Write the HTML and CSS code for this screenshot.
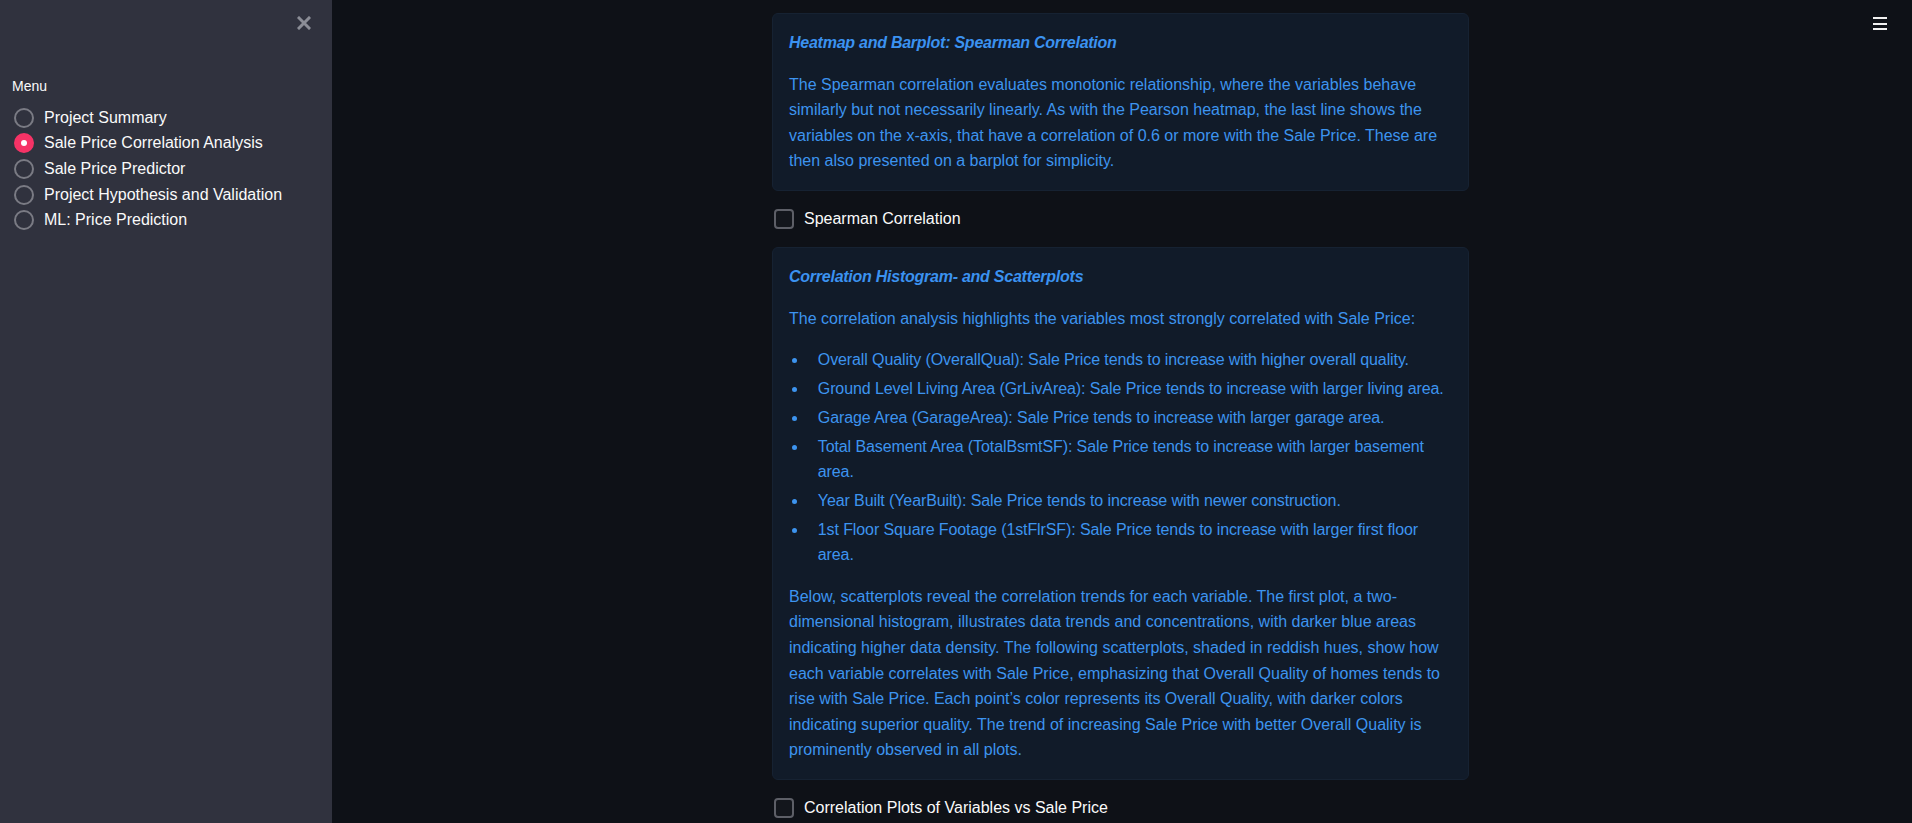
FILE: index.html
```html
<!DOCTYPE html>
<html lang="en">
<head>
<meta charset="utf-8">
<title>Sale Price Correlation Analysis</title>
<link rel="stylesheet" href="styles.css">
</head>
<body>
<div class="app">
  <aside class="sidebar">
    <div class="sidebar-top">
      <button class="close-btn" aria-label="Close sidebar">
        <svg width="14" height="14" viewBox="0 0 14 14"><path d="M2 2 L12 12 M12 2 L2 12" stroke="#8b8d96" stroke-width="3" stroke-linecap="square"/></svg>
      </button>
    </div>
    <div class="menu-label">Menu</div>
    <ul class="radio-group">
      <li class="radio"><span class="radio-dot"></span><span class="radio-text">Project Summary</span></li>
      <li class="radio selected"><span class="radio-dot"></span><span class="radio-text">Sale Price Correlation Analysis</span></li>
      <li class="radio"><span class="radio-dot"></span><span class="radio-text">Sale Price Predictor</span></li>
      <li class="radio"><span class="radio-dot"></span><span class="radio-text">Project Hypothesis and Validation</span></li>
      <li class="radio"><span class="radio-dot"></span><span class="radio-text">ML: Price Prediction</span></li>
    </ul>
  </aside>
  <main class="main">
    <button class="menu-btn" aria-label="Main menu">
      <span></span><span></span><span></span>
    </button>
    <div class="block">
      <div class="info">
        <p class="info-title">Heatmap and Barplot: Spearman Correlation</p>
        <p>The Spearman correlation evaluates monotonic relationship, where the variables behave similarly but not necessarily linearly. As with the Pearson heatmap, the last line shows the variables on the x-axis, that have a correlation of 0.6 or more with the Sale Price. These are then also presented on a barplot for simplicity.</p>
      </div>
      <label class="checkbox"><span class="box"></span><span>Spearman Correlation</span></label>
      <div class="info">
        <p class="info-title">Correlation Histogram- and Scatterplots</p>
        <p>The correlation analysis highlights the variables most strongly correlated with Sale Price:</p>
        <ul class="bullets">
          <li>Overall Quality (OverallQual): Sale Price tends to increase with higher overall quality.</li>
          <li>Ground Level Living Area (GrLivArea): Sale Price tends to increase with larger living area.</li>
          <li>Garage Area (GarageArea): Sale Price tends to increase with larger garage area.</li>
          <li>Total Basement Area (TotalBsmtSF): Sale Price tends to increase with larger basement area.</li>
          <li>Year Built (YearBuilt): Sale Price tends to increase with newer construction.</li>
          <li>1st Floor Square Footage (1stFlrSF): Sale Price tends to increase with larger first floor area.</li>
        </ul>
        <p>Below, scatterplots reveal the correlation trends for each variable. The first plot, a two-dimensional histogram, illustrates data trends and concentrations, with darker blue areas indicating higher data density. The following scatterplots, shaded in reddish hues, show how each variable correlates with Sale Price, emphasizing that Overall Quality of homes tends to rise with Sale Price. Each point’s color represents its Overall Quality, with darker colors indicating superior quality. The trend of increasing Sale Price with better Overall Quality is prominently observed in all plots.</p>
      </div>
      <label class="checkbox"><span class="box"></span><span>Correlation Plots of Variables vs Sale Price</span></label>
    </div>
  </main>
</div>
</body>
</html>
```

FILE: styles.css
```css
* { box-sizing: border-box; }
html, body {
  margin: 0;
  padding: 0;
  height: 823px;
  overflow: hidden;
  background: #0e1117;
  font-family: "Liberation Sans", Arial, sans-serif;
  color: #fafafa;
}
.app {
  display: flex;
  height: 823px;
}
.sidebar {
  width: 332px;
  flex: none;
  background: #30323e;
  padding: 0 12px;
}
.sidebar-top {
  display: flex;
  justify-content: flex-end;
  padding-top: 16px;
  padding-right: 9px;
  height: 76px;
}
.close-btn {
  background: none;
  border: 0;
  padding: 0;
  width: 14px;
  height: 14px;
  display: block;
  cursor: pointer;
}
.close-btn svg { display: block; }
.menu-label {
  font-size: 14px;
  line-height: 21px;
  color: #fafafa;
}
.radio-group {
  list-style: none;
  margin: 8px 0 0;
  padding: 0;
}
.radio {
  display: flex;
  align-items: center;
  height: 25.6px;
  padding-left: 2px;
}
.radio-dot {
  width: 20px;
  height: 20px;
  border-radius: 50%;
  border: 2px solid #7a7b84;
  flex: none;
  margin-right: 10px;
  display: flex;
  align-items: center;
  justify-content: center;
}
.radio.selected .radio-dot {
  background: #f63366;
  border-color: #f63366;
}
.radio.selected .radio-dot::after {
  content: "";
  width: 6px;
  height: 6px;
  border-radius: 50%;
  background: #ffffff;
}
.radio-text {
  font-size: 16px;
  color: #fafafa;
  white-space: nowrap;
}
.main {
  flex: 1;
  position: relative;
  padding: 13px 3px 0 0;
}
.menu-btn {
  position: absolute;
  top: 17px;
  right: 25px;
  width: 14px;
  height: 13px;
  padding: 0;
  border: 0;
  background: none;
  display: flex;
  flex-direction: column;
  justify-content: space-between;
  cursor: pointer;
}
.menu-btn span {
  display: block;
  height: 2px;
  background: #f0f0f0;
}
.block {
  width: 697px;
  margin: 0 auto;
  display: flex;
  flex-direction: column;
  gap: 16px;
}
.info {
  background: #111b29;
  border: 1px solid #162232;
  border-radius: 6px;
  padding: 16px;
  color: #3d94ef;
  font-size: 16px;
  line-height: 25.6px;
}
.info p {
  margin: 0 0 16px;
}
.info p:last-child { margin-bottom: 0; }
.info-title {
  font-weight: bold;
  font-style: italic;
  color: #3b92f0;
  letter-spacing: -0.25px;
}
.bullets {
  margin: 0 0 16px;
  padding: 0;
  list-style: disc;
  letter-spacing: -0.1px;
}
.bullets li {
  margin: 3.2px 0 3.2px 19.2px;
  padding-left: 9.6px;
}
.bullets li:first-child { margin-top: 0; }
.bullets li:last-child { margin-bottom: 0; }
.checkbox {
  display: flex;
  align-items: center;
  height: 24px;
  font-size: 16px;
  color: #fafafa;
  padding-left: 2px;
}
.checkbox .box {
  width: 20px;
  height: 20px;
  border: 2px solid #5d5f67;
  border-radius: 4px;
  background: #13161c;
  margin-right: 10px;
  flex: none;
}
```
